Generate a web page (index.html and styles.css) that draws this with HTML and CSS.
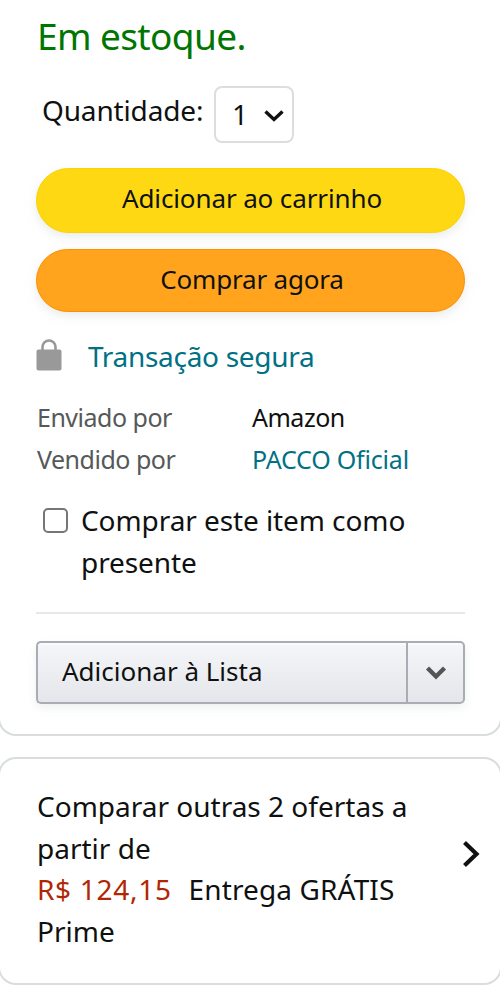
FILE: index.html
```html
<!DOCTYPE html>
<html lang="pt-BR">
<head>
<meta charset="utf-8">
<title>Comprar</title>
<link rel="stylesheet" href="styles.css">
</head>
<body>
<main class="box buy">
  <h1 class="stock">Em estoque.</h1>
  <div class="quantity">
    <span class="quantity-label">Quantidade:</span>
    <button class="select"><span>1</span><svg width="20" height="14" viewBox="0 0 20 14"><path d="M1.500 3.500l8.500 8 8.500-8" fill="none" stroke="#111" stroke-width="3.400"/></svg></button>
  </div>
  <button class="pill cart">Adicionar ao carrinho</button>
  <button class="pill now">Comprar agora</button>
  <div class="secure">
    <svg width="26" height="32" viewBox="0 0 26 32"><path d="M6.500 13V8a6.500 6.500 0 0 1 13 0V13" fill="none" stroke="#999" stroke-width="2.600"/><rect x=".5" y="10.500" width="25" height="21" rx="2" fill="#999"/></svg>
    <a>Transação segura</a>
  </div>
  <dl class="seller">
    <dt>Enviado por</dt><dd>Amazon</dd>
    <dt>Vendido por</dt><dd class="link">PACCO Oficial</dd>
  </dl>
  <label class="gift"><span class="check"></span><span class="gift-text">Comprar este item como<br>presente</span></label>
  <hr>
  <div class="list">
    <button class="list-main">Adicionar à Lista</button>
    <button class="list-more"><svg width="22" height="16" viewBox="0 0 22 16"><path d="M2.500 3l8.500 8.500L19.500 3" fill="none" stroke="#555" stroke-width="4.400"/></svg></button>
  </div>
</main>
<section class="box offers">
  <p>Comparar outras 2 ofertas a<br>partir de<br><span class="price">R$ 124,15</span><span class="delivery">Entrega GRÁTIS</span><br>Prime</p>
  <svg width="20" height="30" viewBox="0 0 20 30"><path d="M3.500 3.500L15.500 15 3.500 26.500" fill="none" stroke="#111" stroke-width="4.200"/></svg>
</section>
</body>
</html>
```
FILE: styles.css
```css
* { box-sizing: border-box; }
html { overflow: hidden; }
body { margin: 0; background: #fff; color: #0f1111; font: 28px/42px "Noto Sans", sans-serif; }
button { font: inherit; color: inherit; margin: 0; padding: 0; }
svg { display: block; flex: none; }
.box { margin: 0 -2px; border: 2px solid #d9dddd; border-radius: 18px; }
.buy { height: 736px; border-top: 0; border-radius: 0 0 18px 18px; padding: 11px 35px 0 36px; }
.stock { margin: 0 0 0 1px; font-size: 37px; line-height: 50px; font-weight: 400; letter-spacing: -.62px; color: #007600; }
.quantity { display: flex; height: 57px; margin: 25px 0 0 6px; }
.quantity-label { width: 172px; line-height: 48px; letter-spacing: -.15px; white-space: nowrap; }
.select { display: flex; align-items: center; justify-content: space-between; width: 80px; padding: 0 8px 0 16px; border: 2px solid #ddd; border-radius: 8px; background: #fff; }
.select span { padding-bottom: 1px; }
.pill { display: block; width: 429px; height: 65px; margin-top: 24.5px; border-radius: 33px; font-size: 26px; line-height: 57px; padding: 0 0 4px 3px; letter-spacing: -.12px; box-shadow: 0 4px 10px rgba(213,217,217,.5); }
.cart { background: #ffd814; border: 1px solid #fcd200; }
.now { height: 63px; margin-top: 16.5px; padding-bottom: 2px; background: #ffa41c; border: 1.5px solid #ff8f00; line-height: 57px; letter-spacing: -.2px; }
.secure { display: flex; align-items: center; gap: 26px; height: 42px; margin-top: 23px; color: #007185; letter-spacing: -.3px; }
.secure svg { margin-top: -2px; }
.seller { display: grid; grid-template-columns: 215px 1fr; margin: 19px 0 0 1px; font-size: 25px; letter-spacing: -.5px; }
.seller dt { color: #565959; }
.seller dd { margin: 0; }
.seller .link { color: #007185; letter-spacing: -.2px; }
.gift { display: flex; gap: 13px; margin: 19px 0 0 7px; letter-spacing: -.08px; }
.check { width: 25px; height: 25px; margin-top: 9px; border: 2px solid #767676; border-radius: 5px; }
hr { width: 429px; height: 2px; margin: 29px 0 27px; border: 0; background: #e7e7e7; }
.list { display: flex; width: 429px; height: 63px; border-radius: 5px; font-size: 26px; box-shadow: 0 4px 10px rgba(213,217,217,.4); }
.list button { border: 2px solid #a9acb4; background: linear-gradient(#f5f6f9, #e5e6eb); box-shadow: inset 0 2px #fff9; }
.list .list-main { flex: 1; padding: 0 0 3px 24px; text-align: left; border-right: 0; border-radius: 5px 0 0 5px; }
.list .list-more { display: flex; align-items: center; justify-content: center; width: 59px; border-radius: 0 5px 5px 0; }
.offers { display: flex; align-items: center; justify-content: space-between; height: 228px; margin-top: 21px; padding: 0 19.5px 0 37px; }
.offers p { margin: 0; padding-bottom: 4px; line-height: 41.5px; white-space: nowrap; }
.price { color: #b12704; letter-spacing: .7px; margin-right: 17px; }
.delivery { letter-spacing: .12px; }
.offers svg { margin-bottom: 34px; }
```
